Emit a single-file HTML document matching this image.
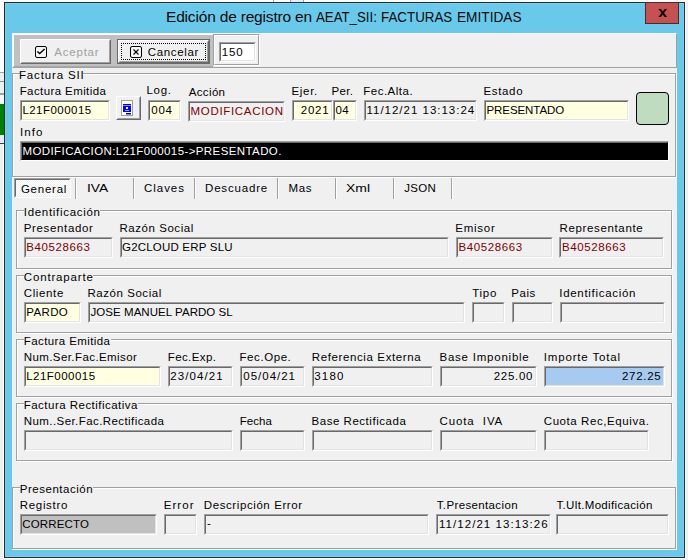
<!DOCTYPE html><html><head><meta charset="utf-8"><style>
html,body{margin:0;padding:0;width:688px;height:560px;overflow:hidden;background:#fff;position:relative;}
.t{position:absolute;font-family:'Liberation Sans',sans-serif;font-size:11.5px;line-height:14px;white-space:pre;color:#000;}
.ed{position:absolute;box-sizing:border-box;border:1px solid;border-color:#a0a0a0 #fff #fff #a0a0a0;}
.ei{position:absolute;left:0;top:0;right:0;bottom:0;border:1px solid;}
</style></head><body>
<div style="position:absolute;left:0px;top:72px;width:4px;height:1px;background:#a0a0a0;"></div>
<div style="position:absolute;left:0px;top:73px;width:4px;height:8px;background:#f0f0f0;"></div>
<div style="position:absolute;left:0px;top:81px;width:4px;height:1px;background:#909090;"></div>
<div style="position:absolute;left:0px;top:82px;width:4px;height:11px;background:#f0f0f0;"></div>
<div style="position:absolute;left:0px;top:93px;width:4px;height:2px;background:#a0a0a0;"></div>
<div style="position:absolute;left:0px;top:95px;width:4px;height:9px;background:#fafafa;"></div>
<div style="position:absolute;left:0px;top:104px;width:4px;height:31px;background:#008000;"></div>
<div style="position:absolute;left:0px;top:135px;width:4px;height:8px;background:#e8ecf8;"></div>
<div style="position:absolute;left:0px;top:143px;width:4px;height:1px;background:#404040;"></div>
<div style="position:absolute;left:0px;top:144px;width:3px;height:416px;background:#f0f0f0;"></div>
<div style="position:absolute;left:686px;top:2px;width:2px;height:558px;background:#f0f0f0;"></div>
<div style="position:absolute;left:0px;top:559px;width:688px;height:1px;background:#f0f0f0;"></div>
<div style="position:absolute;left:273px;top:0px;width:1px;height:2px;background:#a0a0a0;"></div>
<div style="position:absolute;left:291px;top:0px;width:12px;height:2px;background:#e4eef8;"></div>
<div style="position:absolute;left:290px;top:0px;width:1px;height:2px;background:#a0a0a0;"></div>
<div style="position:absolute;left:303px;top:0px;width:1px;height:2px;background:#a0a0a0;"></div>
<div style="position:absolute;left:4px;top:2px;width:681px;height:556px;background:#2b2b2b;"></div>
<div style="position:absolute;left:5px;top:3px;width:679px;height:554px;background:#73d3f2;"></div>
<div style="position:absolute;left:6px;top:4px;width:677px;height:552px;background:#69c9ea;"></div>
<div style="position:absolute;left:166px;top:7px;font-family:'Liberation Sans',sans-serif;font-size:15.5px;line-height:20px;letter-spacing:-0.181px;color:#0a0a0a;white-space:pre;transform:scaleX(1);transform-origin:0 0">Edición de registro en</div>
<div style="position:absolute;left:316.2px;top:7px;font-family:'Liberation Sans',sans-serif;font-size:15.5px;line-height:20px;letter-spacing:0px;color:#0a0a0a;white-space:pre;transform:scaleX(0.8543);transform-origin:0 0">AEAT_SII:</div>
<div style="position:absolute;left:381.1px;top:7px;font-family:'Liberation Sans',sans-serif;font-size:15.5px;line-height:20px;letter-spacing:0px;color:#0a0a0a;white-space:pre;transform:scaleX(0.8617);transform-origin:0 0">FACTURAS</div>
<div style="position:absolute;left:456.5px;top:7px;font-family:'Liberation Sans',sans-serif;font-size:15.5px;line-height:20px;letter-spacing:0px;color:#0a0a0a;white-space:pre;transform:scaleX(0.8819);transform-origin:0 0">EMITIDAS</div>
<div style="position:absolute;left:645px;top:2px;width:34px;height:22px;background:#c75050;border:1px solid #4a2a2a;box-sizing:border-box;"></div>
<svg style="position:absolute;left:658px;top:9px" width="9.5" height="8" viewBox="0 0 10 9"><path d="M0 0 L2.9 0 L5 2.9 L7.1 0 L10 0 L6.3 4.5 L10 9 L7.1 9 L5 6.1 L2.9 9 L0 9 L3.7 4.5 Z" fill="#000"/></svg>
<div style="position:absolute;left:12px;top:33px;width:665px;height:517px;background:#f0f0f0;"></div>
<div style="position:absolute;left:12px;top:33px;width:665px;height:35px;background:#f0f0f0;border-top:1px solid #fff;border-left:1px solid #fff;border-right:1px solid #a0a0a0;border-bottom:1px solid #a0a0a0;box-sizing:border-box;"></div>
<div style="position:absolute;left:13px;top:34px;width:200px;height:33px;background:#c0c0c0;border-top:1px solid #fff;border-left:1px solid #fff;border-bottom:1px solid #a8a8a8;box-sizing:border-box;"></div>
<div style="position:absolute;left:20px;top:39px;width:91px;height:25px;background:#f0f0f0;border:1px solid;border-color:#fff #696969 #696969 #fff;box-sizing:border-box;"></div>
<div style="position:absolute;left:21px;top:40px;width:89px;height:23px;border:1px solid;border-color:#f0f0f0 #a0a0a0 #a0a0a0 #f0f0f0;box-sizing:border-box;"></div>
<svg style="position:absolute;left:34px;top:45px" width="14" height="14" viewBox="0 0 14 14"><rect x="1.5" y="1.5" width="11" height="11" rx="1.5" fill="#f4f4f4" stroke="#000" stroke-width="1"/><path d="M3.4 6.4 L5.7 8.6 L10.6 4.0" fill="none" stroke="#000" stroke-width="1.35"/></svg>
<div style="position:absolute;left:117px;top:39px;width:93px;height:25px;background:#f0f0f0;border:1px solid #696969;box-sizing:border-box;"></div>
<div style="position:absolute;left:118px;top:40px;width:91px;height:23px;border:1px solid;border-color:#fff #696969 #696969 #fff;box-sizing:border-box;"></div>
<div style="position:absolute;left:119px;top:41px;width:89px;height:21px;border:1px solid;border-color:#f0f0f0 #a0a0a0 #a0a0a0 #f0f0f0;box-sizing:border-box;"></div>
<div style="position:absolute;left:121px;top:43px;width:85px;height:17px;border:1px dotted #000;box-sizing:border-box;"></div>
<svg style="position:absolute;left:129px;top:45px" width="14" height="14" viewBox="0 0 14 14"><rect x="1.5" y="1.5" width="11" height="11" rx="1.5" fill="#f4f4f4" stroke="#000" stroke-width="1"/><path d="M4.5 4.5 L9.5 9.5 M9.5 4.5 L4.5 9.5" fill="none" stroke="#000" stroke-width="1.1"/></svg>
<div style="position:absolute;left:213px;top:34px;width:47px;height:32px;border:1px solid;border-color:#a0a0a0 #fff #fff #a0a0a0;box-sizing:border-box;"></div>
<div style="position:absolute;left:214px;top:35px;width:45px;height:30px;border:1px solid;border-color:#fff #a0a0a0 #a0a0a0 #fff;box-sizing:border-box;"></div>
<div class="ed" style="left:219px;top:42px;width:37px;height:20px;"><div class="ei" style="background:#fff;border-color:#696969 #e3e3e3 #e3e3e3 #696969"></div></div>
<div style="position:absolute;left:13px;top:74px;width:664px;height:104px;border:1px solid #fff;box-sizing:border-box;"></div>
<div style="position:absolute;left:12px;top:73px;width:664px;height:104px;border:1px solid #a0a0a0;box-sizing:border-box;"></div>
<div style="position:absolute;left:20px;top:72px;width:63px;height:3px;background:#f0f0f0;"></div>
<div class="ed" style="left:20px;top:100px;width:90px;height:21px;"><div class="ei" style="background:#ffffe1;border-color:#696969 #e3e3e3 #e3e3e3 #696969"></div></div>
<div style="position:absolute;left:116px;top:96px;width:25px;height:24px;background:#f0f0f0;border:1px solid;border-color:#fff #696969 #696969 #fff;box-sizing:border-box;"></div>
<div style="position:absolute;left:117px;top:97px;width:23px;height:22px;border:1px solid;border-color:#f0f0f0 #a0a0a0 #a0a0a0 #f0f0f0;box-sizing:border-box;"></div>
<svg style="position:absolute;left:121px;top:100px" width="12" height="16" viewBox="0 0 12 16"><rect x="0.5" y="0.5" width="11" height="15" fill="#fff" stroke="#a0a0a0"/><rect x="2" y="4" width="8" height="1.5" fill="#0000ff"/><rect x="2" y="6" width="8" height="6" fill="#0000ff"/><rect x="5" y="7" width="2" height="2" fill="#ffffc0"/><rect x="4" y="10" width="4" height="1" fill="#a0a0ff"/><rect x="5" y="13" width="5" height="1.5" fill="#0000ff"/></svg>
<div class="ed" style="left:148px;top:100px;width:33px;height:21px;"><div class="ei" style="background:#ffffe1;border-color:#696969 #e3e3e3 #e3e3e3 #696969"></div></div>
<div class="ed" style="left:188px;top:101px;width:97px;height:21px;"><div class="ei" style="background:#f0f0f0;border-color:#696969 #e3e3e3 #e3e3e3 #696969"></div></div>
<div class="ed" style="left:292px;top:100px;width:41px;height:21px;"><div class="ei" style="background:#ffffe1;border-color:#696969 #e3e3e3 #e3e3e3 #696969"></div></div>
<div class="ed" style="left:333px;top:100px;width:24px;height:21px;"><div class="ei" style="background:#ffffe1;border-color:#696969 #e3e3e3 #e3e3e3 #696969"></div></div>
<div class="ed" style="left:364px;top:100px;width:113px;height:21px;"><div class="ei" style="background:#f0f0f0;border-color:#696969 #e3e3e3 #e3e3e3 #696969"></div></div>
<div class="ed" style="left:484px;top:100px;width:145px;height:21px;"><div class="ei" style="background:#ffffe1;border-color:#696969 #e3e3e3 #e3e3e3 #696969"></div></div>
<div style="position:absolute;left:636px;top:92px;width:33px;height:33px;background:#c0dcc0;border:1px solid #000;border-radius:4px;box-sizing:border-box;"></div>
<div class="ed" style="left:20px;top:141px;width:649px;height:20px;"><div class="ei" style="background:#000;border-color:#696969 #000 #000 #696969"></div></div>
<div style="position:absolute;left:14px;top:178px;width:57px;height:20px;border:1px solid;border-color:#a0a0a0 #fff #fff #a0a0a0;box-sizing:border-box;"></div>
<div style="position:absolute;left:15px;top:179px;width:55px;height:18px;border:1px solid;border-color:#696969 #f0f0f0 #f0f0f0 #696969;box-sizing:border-box;background-color:#f8f8f8;background-image:repeating-conic-gradient(#ffffff 0 25%, #f0f0f0 0 50%);background-size:2px 2px;"></div>
<div style="position:absolute;left:75px;top:178px;width:1px;height:21px;background:#a0a0a0;"></div>
<div style="position:absolute;left:76px;top:178px;width:1px;height:21px;background:#fff;"></div>
<div style="position:absolute;left:133px;top:178px;width:1px;height:21px;background:#a0a0a0;"></div>
<div style="position:absolute;left:134px;top:178px;width:1px;height:21px;background:#fff;"></div>
<div style="position:absolute;left:194px;top:178px;width:1px;height:21px;background:#a0a0a0;"></div>
<div style="position:absolute;left:195px;top:178px;width:1px;height:21px;background:#fff;"></div>
<div style="position:absolute;left:277px;top:178px;width:1px;height:21px;background:#a0a0a0;"></div>
<div style="position:absolute;left:278px;top:178px;width:1px;height:21px;background:#fff;"></div>
<div style="position:absolute;left:335px;top:178px;width:1px;height:21px;background:#a0a0a0;"></div>
<div style="position:absolute;left:336px;top:178px;width:1px;height:21px;background:#fff;"></div>
<div style="position:absolute;left:393px;top:178px;width:1px;height:21px;background:#a0a0a0;"></div>
<div style="position:absolute;left:394px;top:178px;width:1px;height:21px;background:#fff;"></div>
<div style="position:absolute;left:451px;top:178px;width:1px;height:21px;background:#a0a0a0;"></div>
<div style="position:absolute;left:452px;top:178px;width:1px;height:21px;background:#fff;"></div>
<div style="position:absolute;left:17px;top:211px;width:656px;height:59px;border:1px solid #fff;box-sizing:border-box;"></div>
<div style="position:absolute;left:16px;top:210px;width:656px;height:59px;border:1px solid #a0a0a0;box-sizing:border-box;"></div>
<div style="position:absolute;left:24px;top:209px;width:76px;height:3px;background:#f0f0f0;"></div>
<div class="ed" style="left:24px;top:237px;width:89px;height:21px;"><div class="ei" style="background:#f0f0f0;border-color:#696969 #e3e3e3 #e3e3e3 #696969"></div></div>
<div class="ed" style="left:120px;top:237px;width:329px;height:21px;"><div class="ei" style="background:#f0f0f0;border-color:#696969 #e3e3e3 #e3e3e3 #696969"></div></div>
<div class="ed" style="left:456px;top:237px;width:97px;height:21px;"><div class="ei" style="background:#f0f0f0;border-color:#696969 #e3e3e3 #e3e3e3 #696969"></div></div>
<div class="ed" style="left:559px;top:237px;width:105px;height:21px;"><div class="ei" style="background:#f0f0f0;border-color:#696969 #e3e3e3 #e3e3e3 #696969"></div></div>
<div style="position:absolute;left:17px;top:276px;width:656px;height:58px;border:1px solid #fff;box-sizing:border-box;"></div>
<div style="position:absolute;left:16px;top:275px;width:656px;height:58px;border:1px solid #a0a0a0;box-sizing:border-box;"></div>
<div style="position:absolute;left:24px;top:274px;width:69px;height:3px;background:#f0f0f0;"></div>
<div class="ed" style="left:24px;top:302px;width:57px;height:21px;"><div class="ei" style="background:#ffffe1;border-color:#696969 #e3e3e3 #e3e3e3 #696969"></div></div>
<div class="ed" style="left:88px;top:302px;width:377px;height:21px;"><div class="ei" style="background:#f0f0f0;border-color:#696969 #e3e3e3 #e3e3e3 #696969"></div></div>
<div class="ed" style="left:472px;top:302px;width:33px;height:21px;"><div class="ei" style="background:#f0f0f0;border-color:#696969 #e3e3e3 #e3e3e3 #696969"></div></div>
<div class="ed" style="left:512px;top:302px;width:41px;height:21px;"><div class="ei" style="background:#f0f0f0;border-color:#696969 #e3e3e3 #e3e3e3 #696969"></div></div>
<div class="ed" style="left:560px;top:302px;width:105px;height:21px;"><div class="ei" style="background:#f0f0f0;border-color:#696969 #e3e3e3 #e3e3e3 #696969"></div></div>
<div style="position:absolute;left:17px;top:340px;width:656px;height:58px;border:1px solid #fff;box-sizing:border-box;"></div>
<div style="position:absolute;left:16px;top:339px;width:656px;height:58px;border:1px solid #a0a0a0;box-sizing:border-box;"></div>
<div style="position:absolute;left:24px;top:338px;width:87px;height:3px;background:#f0f0f0;"></div>
<div class="ed" style="left:24px;top:366px;width:137px;height:21px;"><div class="ei" style="background:#ffffe1;border-color:#696969 #e3e3e3 #e3e3e3 #696969"></div></div>
<div class="ed" style="left:168px;top:366px;width:65px;height:21px;"><div class="ei" style="background:#f0f0f0;border-color:#696969 #e3e3e3 #e3e3e3 #696969"></div></div>
<div class="ed" style="left:240px;top:366px;width:65px;height:21px;"><div class="ei" style="background:#f0f0f0;border-color:#696969 #e3e3e3 #e3e3e3 #696969"></div></div>
<div class="ed" style="left:312px;top:366px;width:121px;height:21px;"><div class="ei" style="background:#f0f0f0;border-color:#696969 #e3e3e3 #e3e3e3 #696969"></div></div>
<div class="ed" style="left:440px;top:366px;width:97px;height:21px;"><div class="ei" style="background:#f0f0f0;border-color:#696969 #e3e3e3 #e3e3e3 #696969"></div></div>
<div class="ed" style="left:544px;top:366px;width:121px;height:21px;"><div class="ei" style="background:#a6caf0;border-color:#696969 #e3e3e3 #e3e3e3 #696969"></div></div>
<div style="position:absolute;left:17px;top:404px;width:656px;height:58px;border:1px solid #fff;box-sizing:border-box;"></div>
<div style="position:absolute;left:16px;top:403px;width:656px;height:58px;border:1px solid #a0a0a0;box-sizing:border-box;"></div>
<div style="position:absolute;left:24px;top:402px;width:114px;height:3px;background:#f0f0f0;"></div>
<div class="ed" style="left:24px;top:430px;width:209px;height:21px;"><div class="ei" style="background:#f0f0f0;border-color:#696969 #e3e3e3 #e3e3e3 #696969"></div></div>
<div class="ed" style="left:240px;top:430px;width:65px;height:21px;"><div class="ei" style="background:#f0f0f0;border-color:#696969 #e3e3e3 #e3e3e3 #696969"></div></div>
<div class="ed" style="left:312px;top:430px;width:121px;height:21px;"><div class="ei" style="background:#f0f0f0;border-color:#696969 #e3e3e3 #e3e3e3 #696969"></div></div>
<div class="ed" style="left:440px;top:430px;width:97px;height:21px;"><div class="ei" style="background:#f0f0f0;border-color:#696969 #e3e3e3 #e3e3e3 #696969"></div></div>
<div class="ed" style="left:544px;top:430px;width:105px;height:21px;"><div class="ei" style="background:#f0f0f0;border-color:#696969 #e3e3e3 #e3e3e3 #696969"></div></div>
<div style="position:absolute;left:13px;top:488px;width:664px;height:62px;border:1px solid #fff;box-sizing:border-box;"></div>
<div style="position:absolute;left:12px;top:487px;width:664px;height:62px;border:1px solid #a0a0a0;box-sizing:border-box;"></div>
<div style="position:absolute;left:20px;top:486px;width:73px;height:3px;background:#f0f0f0;"></div>
<div class="ed" style="left:20px;top:514px;width:137px;height:21px;"><div class="ei" style="background:#c0c0c0;border-color:#696969 #e3e3e3 #e3e3e3 #696969"></div></div>
<div class="ed" style="left:164px;top:514px;width:33px;height:21px;"><div class="ei" style="background:#f0f0f0;border-color:#696969 #e3e3e3 #e3e3e3 #696969"></div></div>
<div class="ed" style="left:204px;top:514px;width:225px;height:21px;"><div class="ei" style="background:#f0f0f0;border-color:#696969 #e3e3e3 #e3e3e3 #696969"></div></div>
<div class="ed" style="left:436px;top:514px;width:115px;height:21px;"><div class="ei" style="background:#f0f0f0;border-color:#696969 #e3e3e3 #e3e3e3 #696969"></div></div>
<div class="ed" style="left:556px;top:514px;width:113px;height:21px;"><div class="ei" style="background:#f0f0f0;border-color:#696969 #e3e3e3 #e3e3e3 #696969"></div></div>
<div class="t" style="left:54.3px;top:45px;letter-spacing:0.783px;color:#a0a0a0">Aceptar</div>
<div class="t" style="left:147.8px;top:45px;letter-spacing:0.643px;color:#000">Cancelar</div>
<div class="t" style="left:221.7px;top:45px;letter-spacing:0.85px;color:#000">150</div>
<div class="t" style="left:19px;top:68px;letter-spacing:0.84px;color:#000">Factura SII</div>
<div class="t" style="left:19.7px;top:84px;letter-spacing:0.402px;color:#000">Factura Emitida</div>
<div class="t" style="left:22.4px;top:103px;letter-spacing:0.467px;color:#000">L21F000015</div>
<div class="t" style="left:146.5px;top:83px;letter-spacing:0.667px;color:#000">Log.</div>
<div class="t" style="left:151.25px;top:103px;letter-spacing:0.75px;color:#000">004</div>
<div class="t" style="left:188.75px;top:85px;letter-spacing:0.35px;color:#000">Acción</div>
<div class="t" style="left:190.5px;top:104px;letter-spacing:0.682px;color:#800000">MODIFICACION</div>
<div class="t" style="left:291.5px;top:84px;letter-spacing:0.688px;color:#000">Ejer.</div>
<div class="t" style="left:300.75px;top:103px;letter-spacing:0.75px;color:#000">2021</div>
<div class="t" style="left:331.5px;top:84px;letter-spacing:0.333px;color:#000">Per.</div>
<div class="t" style="left:335.5px;top:103px;letter-spacing:0.25px;color:#000">04</div>
<div class="t" style="left:363.25px;top:84px;letter-spacing:0.5px;color:#000">Fec.Alta.</div>
<div class="t" style="left:366.5px;top:103px;letter-spacing:0.988px;color:#000">11/12/21 13:13:24</div>
<div class="t" style="left:483.5px;top:84px;letter-spacing:0.65px;color:#000">Estado</div>
<div class="t" style="left:486.5px;top:103px;letter-spacing:-0.083px;color:#000">PRESENTADO</div>
<div class="t" style="left:20px;top:125px;letter-spacing:1.083px;color:#000">Info</div>
<div class="t" style="left:22.5px;top:144px;letter-spacing:0.4px;color:#fff">MODIFICACION:L21F000015-&gt;PRESENTADO.</div>
<div class="t" style="left:20.9px;top:182px;letter-spacing:0.767px;color:#000">General</div>
<div class="t" style="left:86.6px;top:181px;letter-spacing:0px;color:#000;transform:scaleX(1.2);transform-origin:0 0">IVA</div>
<div class="t" style="left:144px;top:181px;letter-spacing:0.96px;color:#000">Claves</div>
<div class="t" style="left:205px;top:181px;letter-spacing:0.825px;color:#000">Descuadre</div>
<div class="t" style="left:288.5px;top:181px;letter-spacing:0.65px;color:#000">Mas</div>
<div class="t" style="left:346px;top:181px;letter-spacing:0px;color:#000;transform:scaleX(1.2111);transform-origin:0 0">Xml</div>
<div class="t" style="left:404.3px;top:181px;letter-spacing:0.267px;color:#000">JSON</div>
<div class="t" style="left:23.75px;top:205px;letter-spacing:0.696px;color:#000">Identificación</div>
<div class="t" style="left:23.75px;top:221px;letter-spacing:0.65px;color:#000">Presentador</div>
<div class="t" style="left:26.25px;top:240px;letter-spacing:0.604px;color:#800000">B40528663</div>
<div class="t" style="left:119.5px;top:221px;letter-spacing:0.545px;color:#000">Razón Social</div>
<div class="t" style="left:122px;top:240px;letter-spacing:0.196px;color:#000">G2CLOUD ERP SLU</div>
<div class="t" style="left:455.25px;top:221px;letter-spacing:0.75px;color:#000">Emisor</div>
<div class="t" style="left:458.5px;top:240px;letter-spacing:0.604px;color:#800000">B40528663</div>
<div class="t" style="left:559.5px;top:221px;letter-spacing:0.646px;color:#000">Representante</div>
<div class="t" style="left:562px;top:240px;letter-spacing:0.604px;color:#800000">B40528663</div>
<div class="t" style="left:23.75px;top:270px;letter-spacing:0.85px;color:#000">Contraparte</div>
<div class="t" style="left:23.75px;top:286px;letter-spacing:0.625px;color:#000">Cliente</div>
<div class="t" style="left:26.25px;top:305px;letter-spacing:0.375px;color:#000">PARDO</div>
<div class="t" style="left:87.5px;top:286px;letter-spacing:0.545px;color:#000">Razón Social</div>
<div class="t" style="left:90.5px;top:305px;letter-spacing:0.053px;color:#000">JOSE MANUEL PARDO SL</div>
<div class="t" style="left:472.2px;top:286px;letter-spacing:0.767px;color:#000">Tipo</div>
<div class="t" style="left:511.3px;top:286px;letter-spacing:0.567px;color:#000">Pais</div>
<div class="t" style="left:559.3px;top:286px;letter-spacing:0.696px;color:#000">Identificación</div>
<div class="t" style="left:23.75px;top:334px;letter-spacing:0.402px;color:#000">Factura Emitida</div>
<div class="t" style="left:23.75px;top:350px;letter-spacing:0.412px;color:#000">Num.Ser.Fac.Emisor</div>
<div class="t" style="left:26.25px;top:369px;letter-spacing:0.467px;color:#000">L21F000015</div>
<div class="t" style="left:167.75px;top:350px;letter-spacing:0.393px;color:#000">Fec.Exp.</div>
<div class="t" style="left:170.25px;top:369px;letter-spacing:1.107px;color:#000">23/04/21</div>
<div class="t" style="left:239.5px;top:350px;letter-spacing:0.571px;color:#000">Fec.Ope.</div>
<div class="t" style="left:243.25px;top:369px;letter-spacing:1.0px;color:#000">05/04/21</div>
<div class="t" style="left:311.75px;top:350px;letter-spacing:0.618px;color:#000">Referencia Externa</div>
<div class="t" style="left:314.25px;top:369px;letter-spacing:1.167px;color:#000">3180</div>
<div class="t" style="left:439.5px;top:350px;letter-spacing:0.769px;color:#000">Base Imponible</div>
<div class="t" style="left:493.75px;top:369px;letter-spacing:0.7px;color:#000">225.00</div>
<div class="t" style="left:543.75px;top:350px;letter-spacing:0.833px;color:#000">Importe Total</div>
<div class="t" style="left:622px;top:369px;letter-spacing:0.7px;color:#000">272.25</div>
<div class="t" style="left:23.75px;top:398px;letter-spacing:0.475px;color:#000">Factura Rectificativa</div>
<div class="t" style="left:23.75px;top:414px;letter-spacing:0.424px;color:#000">Num..Ser.Fac.Rectificada</div>
<div class="t" style="left:239.75px;top:414px;letter-spacing:0.062px;color:#000">Fecha</div>
<div class="t" style="left:311.5px;top:414px;letter-spacing:0.533px;color:#000">Base Rectificada</div>
<div class="t" style="left:439.5px;top:414px;letter-spacing:0.889px;color:#000">Cuota  IVA</div>
<div class="t" style="left:543.75px;top:414px;letter-spacing:0.578px;color:#000">Cuota Rec,Equiva.</div>
<div class="t" style="left:19.75px;top:482px;letter-spacing:0.523px;color:#000">Presentación</div>
<div class="t" style="left:19.75px;top:498px;letter-spacing:0.679px;color:#000">Registro</div>
<div class="t" style="left:22.25px;top:517px;letter-spacing:0.143px;color:#000">CORRECTO</div>
<div class="t" style="left:163.75px;top:498px;letter-spacing:1.062px;color:#000">Error</div>
<div class="t" style="left:203.75px;top:498px;letter-spacing:0.594px;color:#000">Descripción Error</div>
<div class="t" style="left:207px;top:516px;letter-spacing:0px;color:#000">-</div>
<div class="t" style="left:436.75px;top:498px;letter-spacing:0.365px;color:#000">T.Presentacion</div>
<div class="t" style="left:439px;top:517px;letter-spacing:1.047px;color:#000">11/12/21 13:13:26</div>
<div class="t" style="left:556.5px;top:498px;letter-spacing:0.338px;color:#000">T.Ult.Modificación</div>
</body></html>
